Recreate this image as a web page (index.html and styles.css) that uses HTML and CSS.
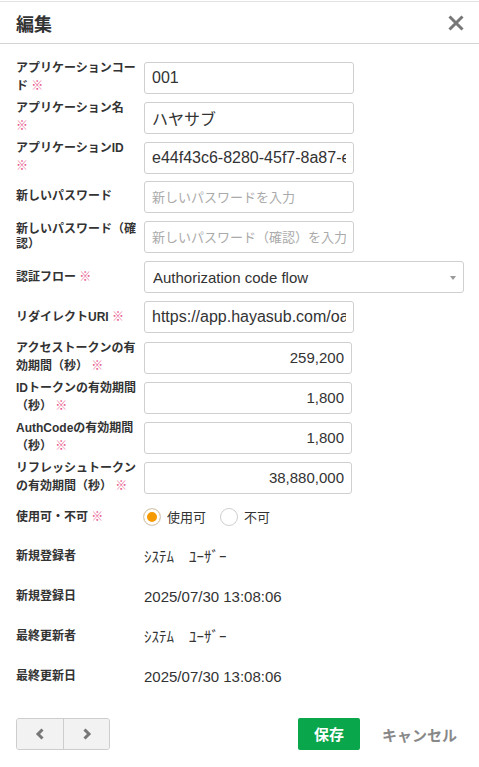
FILE: index.html
```html
<!DOCTYPE html>
<html lang="ja">
<head>
<meta charset="utf-8">
<title>編集</title>
<link rel="stylesheet" href="styles.css">
</head>
<body>
<div class="dialog">
  <header class="dialog-head">
    <h1 class="dialog-title">編集</h1>
    <button class="close-btn" type="button" aria-label="閉じる">
      <svg width="16" height="16" viewBox="0 0 16 16"><path d="M1.5 1.5L14.5 14.5M14.5 1.5L1.5 14.5" stroke="#777" stroke-width="3" fill="none"/></svg>
    </button>
  </header>
  <form class="dialog-body">
    <div class="row">
      <label class="row-label">アプリケーションコード <span class="req">※</span></label>
      <input class="text-input" type="text" value="001">
    </div>
    <div class="row">
      <label class="row-label">アプリケーション名 <span class="req">※</span></label>
      <input class="text-input" type="text" value="ハヤサブ">
    </div>
    <div class="row">
      <label class="row-label">アプリケーションID <span class="req">※</span></label>
      <input class="text-input" type="text" value="e44f43c6-8280-45f7-8a87-e1b2c3d4e5f6">
    </div>
    <div class="row">
      <label class="row-label">新しいパスワード</label>
      <input class="text-input" type="password" placeholder="新しいパスワードを入力">
    </div>
    <div class="row">
      <label class="row-label">新しいパスワード（確認）</label>
      <input class="text-input" type="password" placeholder="新しいパスワード（確認）を入力">
    </div>
    <div class="row">
      <label class="row-label">認証フロー <span class="req">※</span></label>
      <div class="select-wrap">
        <select class="select-input">
          <option>Authorization code flow</option>
        </select>
      </div>
    </div>
    <div class="row">
      <label class="row-label">リダイレクトURI <span class="req">※</span></label>
      <input class="text-input" type="text" value="https://app.hayasub.com/oauth/callback">
    </div>
    <div class="row">
      <label class="row-label">アクセストークンの有効期間（秒） <span class="req">※</span></label>
      <input class="text-input num-input" type="text" value="259,200">
    </div>
    <div class="row">
      <label class="row-label">IDトークンの有効期間（秒） <span class="req">※</span></label>
      <input class="text-input num-input" type="text" value="1,800">
    </div>
    <div class="row">
      <label class="row-label">AuthCodeの有効期間（秒） <span class="req">※</span></label>
      <input class="text-input num-input" type="text" value="1,800">
    </div>
    <div class="row">
      <label class="row-label">リフレッシュトークンの有効期間（秒） <span class="req">※</span></label>
      <input class="text-input num-input" type="text" value="38,880,000">
    </div>
    <div class="row">
      <span class="row-label">使用可・不可 <span class="req">※</span></span>
      <div class="radio-group">
        <label class="radio-item"><input class="radio" type="radio" name="enabled" checked><span>使用可</span></label>
        <label class="radio-item"><input class="radio" type="radio" name="enabled"><span>不可</span></label>
      </div>
    </div>
    <div class="row">
      <span class="row-label">新規登録者</span>
      <span class="row-value">ｼｽﾃﾑ　ﾕｰｻﾞｰ</span>
    </div>
    <div class="row">
      <span class="row-label">新規登録日</span>
      <span class="row-value">2025/07/30 13:08:06</span>
    </div>
    <div class="row">
      <span class="row-label">最終更新者</span>
      <span class="row-value">ｼｽﾃﾑ　ﾕｰｻﾞｰ</span>
    </div>
    <div class="row">
      <span class="row-label">最終更新日</span>
      <span class="row-value">2025/07/30 13:08:06</span>
    </div>
  </form>
  <footer class="dialog-foot">
    <div class="pager">
      <button class="pager-btn" type="button" aria-label="前へ">
        <svg width="10" height="12" viewBox="0 0 10 12"><polyline points="7.5,1.5 3,6 7.5,10.5" stroke="#777" stroke-width="3" fill="none"/></svg>
      </button>
      <button class="pager-btn pager-next" type="button" aria-label="次へ">
        <svg width="10" height="12" viewBox="0 0 10 12"><polyline points="2.5,1.5 7,6 2.5,10.5" stroke="#777" stroke-width="3" fill="none"/></svg>
      </button>
    </div>
    <div class="actions">
      <button class="save-btn" type="button">保存</button>
      <button class="cancel-btn" type="button">キャンセル</button>
    </div>
  </footer>
</div>
</body>
</html>
```

FILE: styles.css
```css
html, body {
  margin: 0;
  padding: 0;
  background: #fff;
}

body {
  font-family: "Liberation Sans", "Noto Sans CJK JP", sans-serif;
  color: #333;
}

.dialog {
  margin-top: 1px;
  border-top: 1px solid #e2e2e2;
  width: 479px;
  box-sizing: border-box;
}

.dialog-head {
  height: 42px;
  box-sizing: border-box;
  border-bottom: 1px solid #d4d4d4;
  display: flex;
  align-items: center;
  justify-content: space-between;
  padding: 0 15px 0 16px;
}

.dialog-title {
  margin: 0;
  font-family: "Noto Sans CJK JP", sans-serif;
  font-size: 18px;
  font-weight: 700;
  line-height: 24px;
  color: #333;
}

.close-btn {
  border: none;
  background: none;
  padding: 0;
  width: 16px;
  height: 16px;
  display: flex;
  cursor: pointer;
}

.dialog-body {
  display: flex;
  flex-direction: column;
  gap: 8px;
  padding: 17px 16px 0 16px;
  margin: 0;
}

.row {
  display: grid;
  grid-template-columns: 128px auto;
  align-items: center;
  height: 32px;
  justify-items: start;
}

.row-label {
  display: block;
  font-family: "Liberation Sans", "Noto Sans CJK JP", sans-serif;
  font-size: 12px;
  font-weight: 700;
  line-height: 15.5px;
  color: #333;
  padding-right: 7px;
  box-sizing: border-box;
  width: 128px;
}

.req {
  color: #e8558a;
  font-weight: 400;
  font-family: "Noto Sans CJK JP", sans-serif;
  line-height: 15.5px;
}

.text-input {
  width: 210px;
  height: 32px;
  box-sizing: border-box;
  border: 1px solid #cfcfcf;
  border-radius: 3px;
  padding: 0 7px;
  margin: 0;
  font-family: "Liberation Sans", "Noto Sans CJK JP", sans-serif;
  font-size: 16px;
  color: #333;
  background: #fff;
  outline: none;
}

.text-input::placeholder {
  color: #aaa;
  font-family: "Noto Sans CJK JP", sans-serif;
  font-size: 13px;
}

.num-input {
  width: 208px;
  text-align: right;
  font-size: 15px;
  padding-right: 7px;
}

.select-wrap {
  position: relative;
  width: 320px;
}

.select-wrap::after {
  content: "";
  position: absolute;
  right: 8px;
  top: 15px;
  border-left: 3px solid transparent;
  border-right: 3px solid transparent;
  border-top: 4px solid #999;
  pointer-events: none;
}

.select-input {
  -webkit-appearance: none;
  appearance: none;
  width: 100%;
  height: 32px;
  box-sizing: border-box;
  border: 1px solid #cfcfcf;
  border-radius: 3px;
  padding: 0 24px 0 8px;
  margin: 0;
  font-family: "Liberation Sans", sans-serif;
  font-size: 15px;
  color: #333;
  background: #fff;
  outline: none;
}

.radio-group {
  display: flex;
  align-items: center;
  gap: 14px;
  margin-left: -1px;
}

.radio-item {
  display: flex;
  align-items: center;
  gap: 6px;
  font-family: "Noto Sans CJK JP", sans-serif;
  font-size: 13px;
  line-height: 18px;
  color: #333;
}

.radio {
  -webkit-appearance: none;
  appearance: none;
  width: 18px;
  height: 18px;
  margin: 0;
  border: 1px solid #cfcfcf;
  border-radius: 50%;
  background: #fff;
  box-sizing: border-box;
}

.radio:checked {
  background: #f59a00;
  box-shadow: inset 0 0 0 3px #fff;
}

.row-value {
  font-family: "Liberation Sans", "Noto Sans CJK JP", sans-serif;
  font-size: 15px;
  line-height: 20px;
  color: #333;
}

.dialog-foot {
  display: flex;
  align-items: center;
  justify-content: space-between;
  padding: 25px 16px 0 16px;
}

.pager {
  display: flex;
  border: 1px solid #cdcdcd;
  border-radius: 3px;
  background: #f2f2f2;
  overflow: hidden;
}

.pager-btn {
  width: 46px;
  height: 30px;
  border: none;
  background: #f2f2f2;
  padding: 0;
  margin: 0;
  display: flex;
  align-items: center;
  justify-content: center;
}

.pager-next {
  border-left: 1px solid #cdcdcd;
}

.actions {
  display: flex;
  align-items: center;
}

.save-btn {
  height: 32px;
  padding: 0 16px;
  border: none;
  border-radius: 2px;
  background: #0aa64b;
  color: #fff;
  font-family: "Noto Sans CJK JP", sans-serif;
  font-size: 15px;
  font-weight: 700;
  line-height: 32px;
}

.cancel-btn {
  height: 32px;
  margin-left: 16px;
  padding: 0 6px;
  border: none;
  background: none;
  color: #888;
  font-family: "Noto Sans CJK JP", sans-serif;
  font-size: 15px;
  font-weight: 700;
}
```
